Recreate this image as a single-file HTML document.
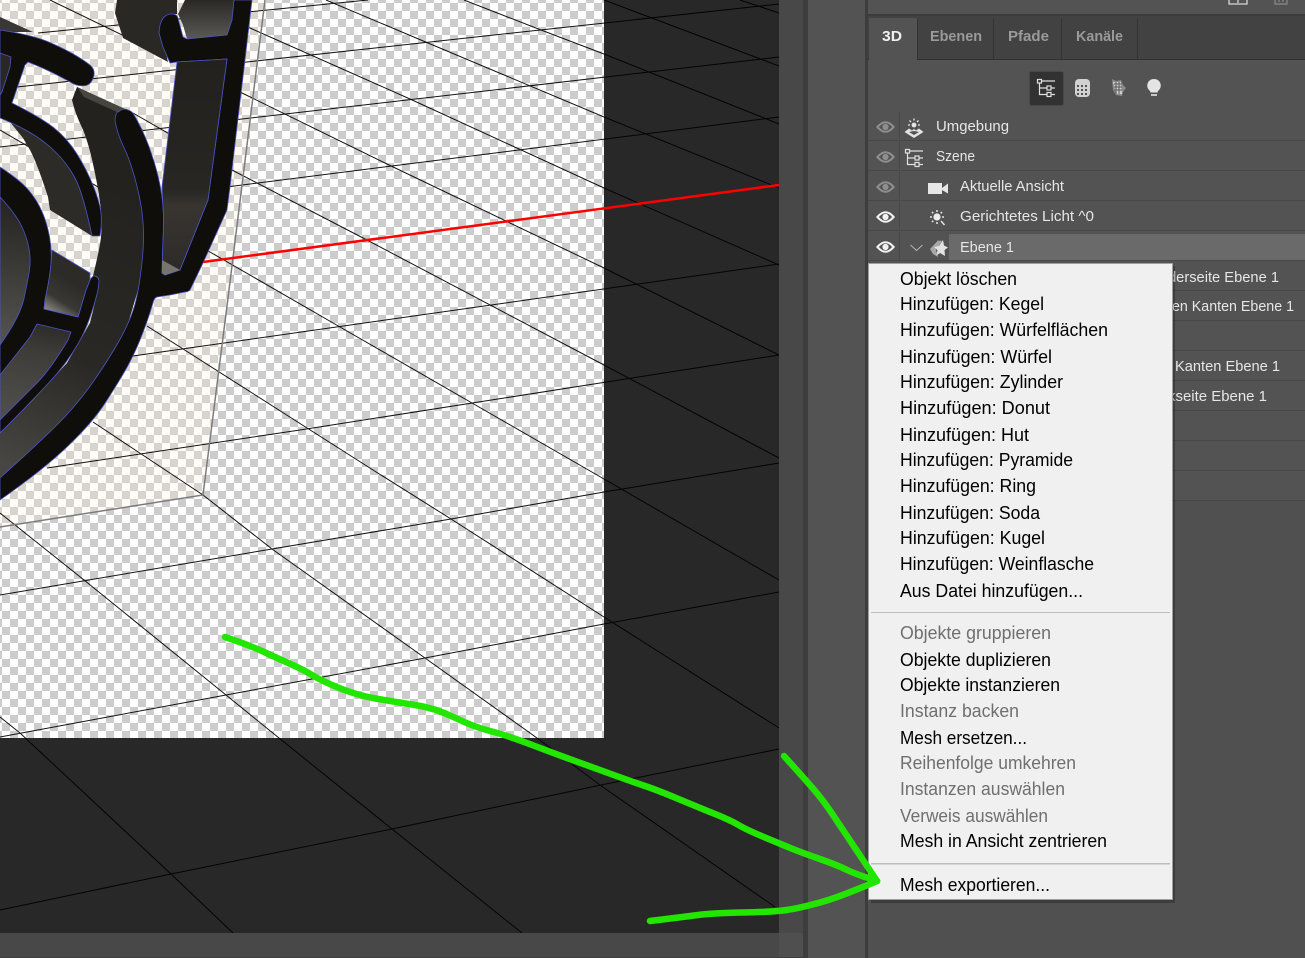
<!DOCTYPE html>
<html><head><meta charset="utf-8"><style>
html,body{margin:0;padding:0;background:#535353;width:1305px;height:958px;overflow:hidden}
svg{display:block}
text{font-family:"Liberation Sans",sans-serif}
.m{font-size:18px;fill:#000}
.d{font-size:18px;fill:#6f6f6f}
.p{font-size:15px;fill:#e6e6e6}
.t{font-size:15px;font-weight:bold;fill:#9a9a9a}
</style></head><body>
<svg width="1305" height="958" viewBox="0 0 1305 958" xmlns="http://www.w3.org/2000/svg">
<defs>
<pattern id="ck" width="16" height="16" patternUnits="userSpaceOnUse" x="2" y="3">
<rect width="16" height="16" fill="#fff"/><rect width="8" height="8" fill="#ccc"/><rect x="8" y="8" width="8" height="8" fill="#ccc"/>
</pattern>
<linearGradient id="bf" gradientUnits="userSpaceOnUse" x1="130" y1="180" x2="20" y2="470"><stop offset="0" stop-color="#24221f"/><stop offset=".6" stop-color="#2a2825"/><stop offset="1" stop-color="#484643"/></linearGradient>
<linearGradient id="hf" gradientUnits="userSpaceOnUse" x1="0" y1="60" x2="0" y2="275"><stop offset="0" stop-color="#23211e"/><stop offset=".6" stop-color="#282623"/><stop offset=".68" stop-color="#383531"/><stop offset="1" stop-color="#2c2a27"/></linearGradient>
<linearGradient id="tf" gradientUnits="userSpaceOnUse" x1="0" y1="0" x2="0" y2="38"><stop offset="0" stop-color="#2a2825"/><stop offset="1" stop-color="#5a5854"/></linearGradient>
<linearGradient id="wf" gradientUnits="userSpaceOnUse" x1="40" y1="325" x2="25" y2="410"><stop offset="0" stop-color="#2e2c29"/><stop offset=".3" stop-color="#3e3c38"/><stop offset="1" stop-color="#4f4d49"/></linearGradient>
<linearGradient id="if" gradientUnits="userSpaceOnUse" x1="25" y1="210" x2="0" y2="340"><stop offset="0" stop-color="#282623"/><stop offset="1" stop-color="#55534f"/></linearGradient>
<linearGradient id="w2" gradientUnits="userSpaceOnUse" x1="70" y1="280" x2="50" y2="312"><stop offset="0" stop-color="#2d2b28"/><stop offset=".6" stop-color="#3a3835"/><stop offset="1" stop-color="#8a8884"/></linearGradient>
<g id="eye"><path d="M-9.5,0Q0,-11.5 9.5,0Q0,11.5 -9.5,0Z" fill="currentColor"/><path d="M-6.6,0Q0,-7.5 6.6,0Q0,7.5 -6.6,0Z" fill="#535353"/><circle r="3.1" fill="currentColor"/></g>
<g id="tree" fill="none" stroke="#e0e0e0" stroke-width="1.2"><rect x="0.5" y="0.5" width="4" height="3.5"/><path d="M4.5,2H18M2.5,4V15.5H10M2.5,9H10M14,9H18M14,15.5H18"/><rect x="10" y="7" width="4" height="4"/><rect x="10" y="13.5" width="4" height="4"/></g>
</defs>

<!-- viewport -->
<rect width="779" height="933" fill="#282828"/>
<rect width="604" height="738" fill="url(#ck)"/>
<polygon points="0,0 265,0 203,495 0,527" fill="#ffeeda" fill-opacity=".22"/>

<!-- grid -->
<g stroke="#000" stroke-width="1" fill="none" opacity=".92">
<path d="M38,33L368,0"/>
<path d="M17,87L779,4"/>
<path d="M0,147L779,57"/>
<path d="M100,203L779,117"/>
<path d="M133,356L779,264"/>
<path d="M47,468L300,430L779,355"/>
<path d="M0,595L272,549L451,519L604,492L779,463"/>
<path d="M0,737L226,695L425,658L604,624L779,592"/>
<path d="M0,910L171,874L392,829L601,785L779,749"/>
<path d="M740,0L779,13"/>
<path d="M604,0L779,66"/>
<path d="M464,0L541,30L604,54L779,124"/>
<path d="M326,0L428,43L604,117L779,188"/>
<path d="M200,0L250,28L410,99L604,188L779,265"/>
<path d="M50,0L242,93L389,165L604,268L779,355"/>
<path d="M133,113L232,170L365,239L604,365L779,458"/>
<path d="M0,130L210,252L340,327L472,403L604,479L779,580"/>
<path d="M147,326L373,470L451,519L604,617L779,728"/>
<path d="M93,422L203,495L272,549L425,658L537,738L600,785L775,907"/>
<path d="M0,513L84,580L226,695L279,738L392,829L522,933"/>
<path d="M0,717L20,733L171,874L233,933"/>
</g>
<!-- bbox -->
<path d="M265,0L228,298L203,495L0,527" fill="none" stroke="#7c7c7c" stroke-width="1.5"/>
<!-- red axis -->
<path d="M203,262L779,185" stroke="#ff0000" stroke-width="2.5" fill="none"/>

<!-- object -->
<g stroke="#4a55c8" stroke-width=".8" stroke-linejoin="round">
<polygon points="0,17 33,32 0,32" fill="#3a3835" stroke="none"/>
<path d="M117,0L115,13L123,38L168,62L160,30L163,18L172,14L177,14L177,0Z" fill="#2a2825" stroke="none"/>
<path d="M185,0L234,0L232,20L227,35L187,39L183,25L178,14Z" fill="url(#tf)" stroke="none"/>
<!-- big face -->
<path d="M72,100L77,87L125,109L143,130L162,260L138,290L127,327L110,357L83,397L50,433L0,478L0,433L33,400L67,363L90,323L98,290L93,276Q100,247 101,237Q102,227 101,212Q100,197 94,168.5Q88,140 81.5,126.5Q75,113 72,100Z" fill="url(#bf)" stroke="none"/>
<path d="M77,87L125,109L117,112L84,97Z" fill="#47453f" stroke="none"/>
<!-- main black shape: big outer band, middle arc and hook -->
<path d="M234,0L252,0L245,60L237,127L230,187L227,210L203,263L190,290Q188,292 185,292L170,295L157,297Q154,298 153,303Q147,323 140,340Q133,357 125.5,370Q118,383 105.5,402.5Q93,422 68,446Q43,470 0,500L0,478Q50,433 66.5,415Q83,397 96.5,377Q110,357 118.5,342Q127,327 132,313.5Q137,300 140,278.5Q143,257 143.5,242Q144,227 142,212Q140,197 135,178.5Q130,160 123.5,146.5Q117,133 115,120Q116,112 118,112Q122,109 125,109Q130,110 133,113Q143,130 149,146.5Q155,163 158.5,178Q162,193 163,206.5Q164,220 163,240L162,273L165,275L180,270L208,200L227,59L177,62L170,63L163,47L159,33Q160,14 172,14Q177,14 178,18L183,37L187,39L227,35L232,20Z" fill="#100e0b"/>
<path d="M162,187L177,62L227,59L208,200L180,270L165,275L162,273L163,240Q164,220 163,206.5Z" fill="url(#hf)"/>
<path d="M162,260L180,270L165,275L162,273Z" fill="#77746f" stroke="none"/>
<!-- face 1 -->
<path d="M10,122Q17,125 30,132.5Q43,140 55,151.5Q67,163 75,178Q83,193 92,236L50,210L48,197Q37,163 30,150L23,138Z" fill="#2d2b28" stroke="none"/>
<!-- arm + arc 1 -->
<path d="M0,30Q33,35 50,42.5Q67,50 77.5,56.5Q88,63 91,66Q95,70 94,75Q92,84 86,85.5Q78,87 70,82Q63,78 53,73Q43,68 28,62L25,65L12,103Q40,117 53.5,127.5Q67,138 77,154Q87,170 93.5,186.5Q100,203 101,213Q102,223 100,236L92,236Q83,193 75,178Q67,163 55,151.5Q43,140 30,132.5Q17,125 0,118Z" fill="#100e0b"/>
<path d="M0,53L11,57L10,67L2,92L0,95Z" fill="#2a2825"/>
<!-- inner black -->
<path d="M0,167Q20,180 28.5,190Q37,200 42,211.5Q47,223 49.5,236.5Q52,250 51,263.5Q50,277 45,300L44,309L78,317L86,290L90,280Q93,275 95,276Q99,277 99,282L98,290Q90,323 78.5,343Q67,363 50,381.5Q33,400 0,433Z" fill="#100e0b"/>
<path d="M0,197Q15,213 21,225Q27,237 29,248.5Q31,260 29.5,270Q28,280 24,298.5Q20,317 0,345Z" fill="url(#if)"/>
<path d="M52,250L90,273L90,280L86,290L78,317L44,309L45,300Q50,277 51,263.5Z" fill="url(#w2)"/>
<path d="M37,324L71,332L68,340Q50,370 36.5,383.5Q23,397 0,420L0,375L30,337Z" fill="url(#wf)"/>
</g>

<!-- side chrome -->
<rect x="779" y="0" width="24" height="958" fill="#484848"/>
<rect x="803" y="0" width="5" height="958" fill="#3d3d3d"/>
<rect x="808" y="0" width="57" height="958" fill="#535353"/>
<rect x="865" y="0" width="3" height="958" fill="#3d3d3d"/>
<rect x="0" y="933" width="779" height="24" fill="#484848"/>
<rect x="779" y="933" width="24" height="24" fill="#4f4f4f"/>
<rect x="0" y="957" width="803" height="1" fill="#3d3d3d"/>

<!-- right panel -->
<rect x="868" y="0" width="437" height="958" fill="#535353"/>
<rect x="868" y="500" width="437" height="458" fill="#505050"/>
<rect x="868" y="14" width="437" height="2" fill="#3b3b3b"/>
<rect x="868" y="16" width="437" height="44" fill="#424242"/>
<rect x="868" y="59" width="437" height="1" fill="#303030"/>
<rect x="869" y="18" width="48" height="42" fill="#535353"/>
<path d="M917.5,18V59M993.5,18V59M1061.5,18V59M1137.5,18V59" stroke="#333" stroke-width="1"/>
<text x="882" y="41" class="t" style="fill:#f0f0f0" textLength="20" lengthAdjust="spacingAndGlyphs">3D</text>
<text x="930" y="41" class="t" textLength="52" lengthAdjust="spacingAndGlyphs">Ebenen</text>
<text x="1008" y="41" class="t" textLength="41" lengthAdjust="spacingAndGlyphs">Pfade</text>
<text x="1076" y="41" class="t" textLength="47" lengthAdjust="spacingAndGlyphs">Kanäle</text>

<!-- top-right partial icons -->
<path d="M1229,0V4H1247V0M1238,0V3" fill="none" stroke="#d8d8d8" stroke-width="1.3"/>
<path d="M1275,0V4H1287V0M1279,0V2M1283,0V2" fill="none" stroke="#8a8a8a" stroke-width="1.2"/>

<!-- toolbar -->
<rect x="1029.5" y="71.5" width="34" height="34" rx="2" fill="#323232" stroke="#484848"/>
<use href="#tree" x="1037" y="79"/>
<rect x="1075" y="79" width="15" height="18" rx="4" fill="#d2d2d2"/>
<g fill="#535353"><rect x="1077" y="85" width="2" height="2"/><rect x="1081" y="85" width="2" height="2"/><rect x="1085" y="85" width="2" height="2"/><rect x="1077" y="89" width="2" height="2"/><rect x="1081" y="89" width="2" height="2"/><rect x="1085" y="89" width="2" height="2"/><rect x="1077" y="93" width="2" height="2"/><rect x="1081" y="93" width="2" height="2"/><rect x="1085" y="93" width="2" height="2"/></g>
<path d="M1112,79L1116,81L1121,80L1123,85L1126,88L1123,92L1122,96L1116,95L1113,90Z" fill="#8b8b8b"/>
<path d="M1113,82L1121,82L1122,94L1116,94Z" fill="#d0d0d0"/>
<path d="M1114,84H1122M1114,87H1122M1114,90H1122M1116,82V94M1119,82V94" stroke="#555" stroke-width="1" fill="none"/>
<path d="M1154,79A6.6,6.6 0 0 1 1158,91L1157.5,92.5H1150.5L1150,91A6.6,6.6 0 0 1 1154,79Z" fill="#e4e4e4"/>
<rect x="1151" y="94" width="6" height="2" fill="#c8c8c8"/>

<!-- rows -->
<g stroke="#484848" stroke-width="1">
<path d="M868,140.5H1305M868,170.5H1305M868,200.5H1305M868,230.5H1305M868,260.5H1305M868,290.5H1305M868,320.5H1305M868,350.5H1305M868,380.5H1305M868,410.5H1305M868,440.5H1305M868,470.5H1305"/>
<path d="M899.5,112V139M899.5,142V169M899.5,172V199M899.5,202V229M899.5,232V260"/>
</g>
<rect x="868" y="500" width="437" height="1" fill="#484848"/>
<rect x="949" y="234" width="356" height="26" fill="#6a6a6a"/>

<use href="#eye" x="885.5" y="127" style="color:#8e8e8e"/>
<use href="#eye" x="885.5" y="157" style="color:#8e8e8e"/>
<use href="#eye" x="885.5" y="187" style="color:#8e8e8e"/>
<use href="#eye" x="885.5" y="217" style="color:#f2f2f2"/>
<use href="#eye" x="885.5" y="247" style="color:#f2f2f2"/>

<!-- umgebung icon -->
<circle cx="914" cy="125" r="2.4" fill="#e4e4e4"/>
<path d="M914,118.5V120.5M908,125H910M918,125H920M909.5,120.5L911,122M918.5,120.5L917,122" stroke="#e4e4e4" stroke-width="1.3" fill="none"/>
<path d="M904.5,132L909,128.5L912,130.5L914,129L916,130.5L919,128.5L923.5,132L914,138Z" fill="#e4e4e4"/>
<path d="M909,132L914,135L919,132L914,131Z" fill="#535353"/>
<use href="#tree" x="905" y="149"/>
<!-- camera -->
<rect x="928" y="183" width="14" height="11" fill="#e6e6e6"/>
<path d="M942,188L948,183.5V193.5L942,190Z" fill="#e6e6e6"/>
<!-- sun -->
<circle cx="937" cy="217" r="3.6" fill="#ececec"/>
<path d="M937,210V212M937,222V224M930,217H932M942,217H944M932,212L933.3,213.3M942,212L940.7,213.3M932,222L933.3,220.7M941,221L944.5,225" stroke="#e4e4e4" stroke-width="1.5" fill="none"/>
<!-- chevron + mesh -->
<path d="M910.5,245L916.5,250.5L922.5,245" fill="none" stroke="#b5b5b5" stroke-width="1"/>
<path d="M930,249L938,240.5L942,241L936,250L938,257L933,254Z" fill="#a8a8a8"/>
<path d="M943,240L944,245.5L948,247.5L944.5,250L945,256L940,253L936.5,255.5L937.5,250L934,247L939,246Z" fill="#e2e2e2"/>

<g>
<text x="936" y="131" class="p" textLength="73" lengthAdjust="spacingAndGlyphs">Umgebung</text>
<text x="936" y="161" class="p" textLength="39" lengthAdjust="spacingAndGlyphs">Szene</text>
<text x="960" y="191" class="p" textLength="104" lengthAdjust="spacingAndGlyphs">Aktuelle Ansicht</text>
<text x="960" y="221" class="p" textLength="134" lengthAdjust="spacingAndGlyphs">Gerichtetes Licht ^0</text>
<text x="960" y="252" class="p" textLength="54" lengthAdjust="spacingAndGlyphs">Ebene 1</text>
<text x="1168" y="282" class="p" textLength="111" lengthAdjust="spacingAndGlyphs">derseite Ebene 1</text>
<text x="1172" y="311" class="p" textLength="122" lengthAdjust="spacingAndGlyphs">en Kanten Ebene 1</text>
<text x="1175" y="371" class="p" textLength="105" lengthAdjust="spacingAndGlyphs">Kanten Ebene 1</text>
<text x="1168" y="401" class="p" textLength="99" lengthAdjust="spacingAndGlyphs">kseite Ebene 1</text>
</g>

<!-- menu -->
<rect x="871" y="266" width="304" height="637" fill="#000" opacity=".25"/>
<rect x="868.5" y="263.5" width="304" height="636" fill="#f0f0f0" stroke="#a0a0a0"/>
<rect x="871" y="612" width="299" height="1" fill="#bcbcbc"/>
<rect x="871" y="863" width="299" height="1.5" fill="#bcbcbc"/>
<text x="900" y="285" class="m" textLength="117" lengthAdjust="spacingAndGlyphs">Objekt löschen</text>
<text x="900" y="310" class="m" textLength="144" lengthAdjust="spacingAndGlyphs">Hinzufügen: Kegel</text>
<text x="900" y="336" class="m" textLength="208" lengthAdjust="spacingAndGlyphs">Hinzufügen: Würfelflächen</text>
<text x="900" y="363" class="m" textLength="152" lengthAdjust="spacingAndGlyphs">Hinzufügen: Würfel</text>
<text x="900" y="388" class="m" textLength="163" lengthAdjust="spacingAndGlyphs">Hinzufügen: Zylinder</text>
<text x="900" y="414" class="m" textLength="150" lengthAdjust="spacingAndGlyphs">Hinzufügen: Donut</text>
<text x="900" y="441" class="m" textLength="129" lengthAdjust="spacingAndGlyphs">Hinzufügen: Hut</text>
<text x="900" y="466" class="m" textLength="173" lengthAdjust="spacingAndGlyphs">Hinzufügen: Pyramide</text>
<text x="900" y="492" class="m" textLength="136" lengthAdjust="spacingAndGlyphs">Hinzufügen: Ring</text>
<text x="900" y="519" class="m" textLength="140" lengthAdjust="spacingAndGlyphs">Hinzufügen: Soda</text>
<text x="900" y="544" class="m" textLength="145" lengthAdjust="spacingAndGlyphs">Hinzufügen: Kugel</text>
<text x="900" y="570" class="m" textLength="194" lengthAdjust="spacingAndGlyphs">Hinzufügen: Weinflasche</text>
<text x="900" y="597" class="m" textLength="183" lengthAdjust="spacingAndGlyphs">Aus Datei hinzufügen...</text>
<text x="900" y="639" class="d" textLength="151" lengthAdjust="spacingAndGlyphs">Objekte gruppieren</text>
<text x="900" y="666" class="m" textLength="151" lengthAdjust="spacingAndGlyphs">Objekte duplizieren</text>
<text x="900" y="691" class="m" textLength="160" lengthAdjust="spacingAndGlyphs">Objekte instanzieren</text>
<text x="900" y="717" class="d" textLength="119" lengthAdjust="spacingAndGlyphs">Instanz backen</text>
<text x="900" y="744" class="m" textLength="127" lengthAdjust="spacingAndGlyphs">Mesh ersetzen...</text>
<text x="900" y="769" class="d" textLength="176" lengthAdjust="spacingAndGlyphs">Reihenfolge umkehren</text>
<text x="900" y="795" class="d" textLength="165" lengthAdjust="spacingAndGlyphs">Instanzen auswählen</text>
<text x="900" y="822" class="d" textLength="148" lengthAdjust="spacingAndGlyphs">Verweis auswählen</text>
<text x="900" y="847" class="m" textLength="207" lengthAdjust="spacingAndGlyphs">Mesh in Ansicht zentrieren</text>
<text x="900" y="891" class="m" textLength="150" lengthAdjust="spacingAndGlyphs">Mesh exportieren...</text>

<!-- green annotation -->
<g fill="none" stroke="#22e600" stroke-width="6.5" stroke-linecap="round" stroke-linejoin="round">
<path d="M225,637Q249,645 263,651.5Q277,658 290.5,664Q304,670 312,675Q320,680 338,687.5Q356,695 375.5,698.5Q395,702 415,705Q435,708 454.5,717.5Q474,727 490,731Q506,735 529.5,744Q553,753 576.5,761.5Q600,770 616.5,776Q633,782 645,786Q657,790 678.5,799Q700,808 715,814Q730,820 738.5,825Q747,830 765,837.5Q783,845 791.5,848.5Q800,852 818.5,858.5Q837,865 845,869Q853,873 865,877L877,881"/>
<path d="M784,756Q803,777 813,788.5Q823,800 833,815Q843,830 860,855.5L877,881"/>
<path d="M877,881Q840,897 820,902.5Q800,908 786.5,910Q773,912 743,912.5Q713,913 698,915Q683,917 650,921"/>
</g>
</svg>
</body></html>
